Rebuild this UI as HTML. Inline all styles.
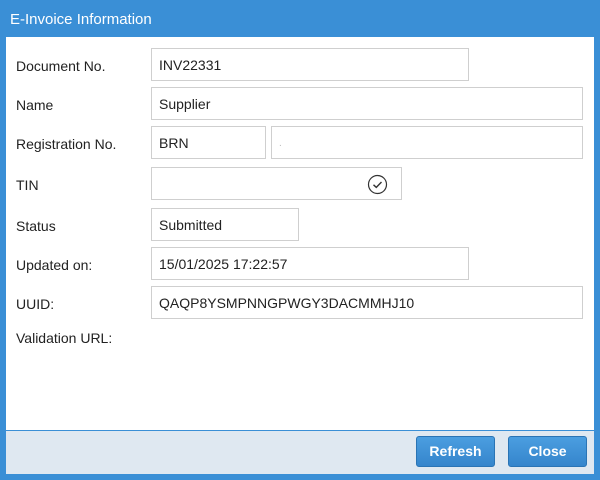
<!DOCTYPE html>
<html><head><meta charset="utf-8"><style>
*{margin:0;padding:0;box-sizing:border-box}
body{width:600px;height:480px;background:#3a8fd6;position:relative;overflow:hidden;font-family:"Liberation Sans",Arial,sans-serif}
.title{position:absolute;left:10px;top:11px;color:#fff;font-size:15px;}
.body{position:absolute;left:6px;top:37px;width:588px;height:393px;background:#fff}
.foot{position:absolute;left:6px;top:430px;width:588px;height:44px;background:#dfe8f1;border-top:1px solid #3a8fd6}
.lbl{position:absolute;left:16px;font-size:14px;color:#222}
.in{position:absolute;border:1px solid #cfcfcf;background:#fff;font-size:14px;color:#222;padding-left:7px;line-height:33px}
.btn{position:absolute;top:436px;width:79px;height:31px;border:1px solid #2a74b5;border-radius:3px;background:linear-gradient(#4b9ee0,#3585cc);color:#fff;font-weight:bold;font-size:14px;text-align:center;line-height:29px}
</style></head><body>
<div class="title">E-Invoice Information</div>
<div class="body"></div>
<div class="foot"></div>
<div class="lbl" style="top:58px">Document No.</div>
<div class="in" style="left:151px;top:48px;width:318px;height:33px">INV22331</div>
<div class="lbl" style="top:97px">Name</div>
<div class="in" style="left:151px;top:87px;width:432px;height:33px">Supplier</div>
<div class="lbl" style="top:136px">Registration No.</div>
<div class="in" style="left:151px;top:126px;width:115px;height:33px">BRN</div>
<div class="in" style="left:271px;top:126px;width:312px;height:33px;color:#bbb;font-size:10px">.</div>
<div class="lbl" style="top:177px">TIN</div>
<div class="in" style="left:151px;top:167px;width:251px;height:33px"></div>
<svg style="position:absolute;left:367px;top:174px" width="21" height="21" viewBox="0 0 21 21"><circle cx="10.5" cy="10.5" r="9" fill="none" stroke="#333" stroke-width="1.2"/><path d="M6.5 10.8l2.8 2.6 5.2-5.4" fill="none" stroke="#333" stroke-width="1.4"/></svg>
<div class="lbl" style="top:218px">Status</div>
<div class="in" style="left:151px;top:208px;width:148px;height:33px">Submitted</div>
<div class="lbl" style="top:257px">Updated on:</div>
<div class="in" style="left:151px;top:247px;width:318px;height:33px">15/01/2025 17:22:57</div>
<div class="lbl" style="top:296px">UUID:</div>
<div class="in" style="left:151px;top:286px;width:432px;height:33px">QAQP8YSMPNNGPWGY3DACMMHJ10</div>
<div class="lbl" style="top:330px">Validation URL:</div>
<div class="btn" style="left:416px">Refresh</div>
<div class="btn" style="left:508px">Close</div>
</body></html>
